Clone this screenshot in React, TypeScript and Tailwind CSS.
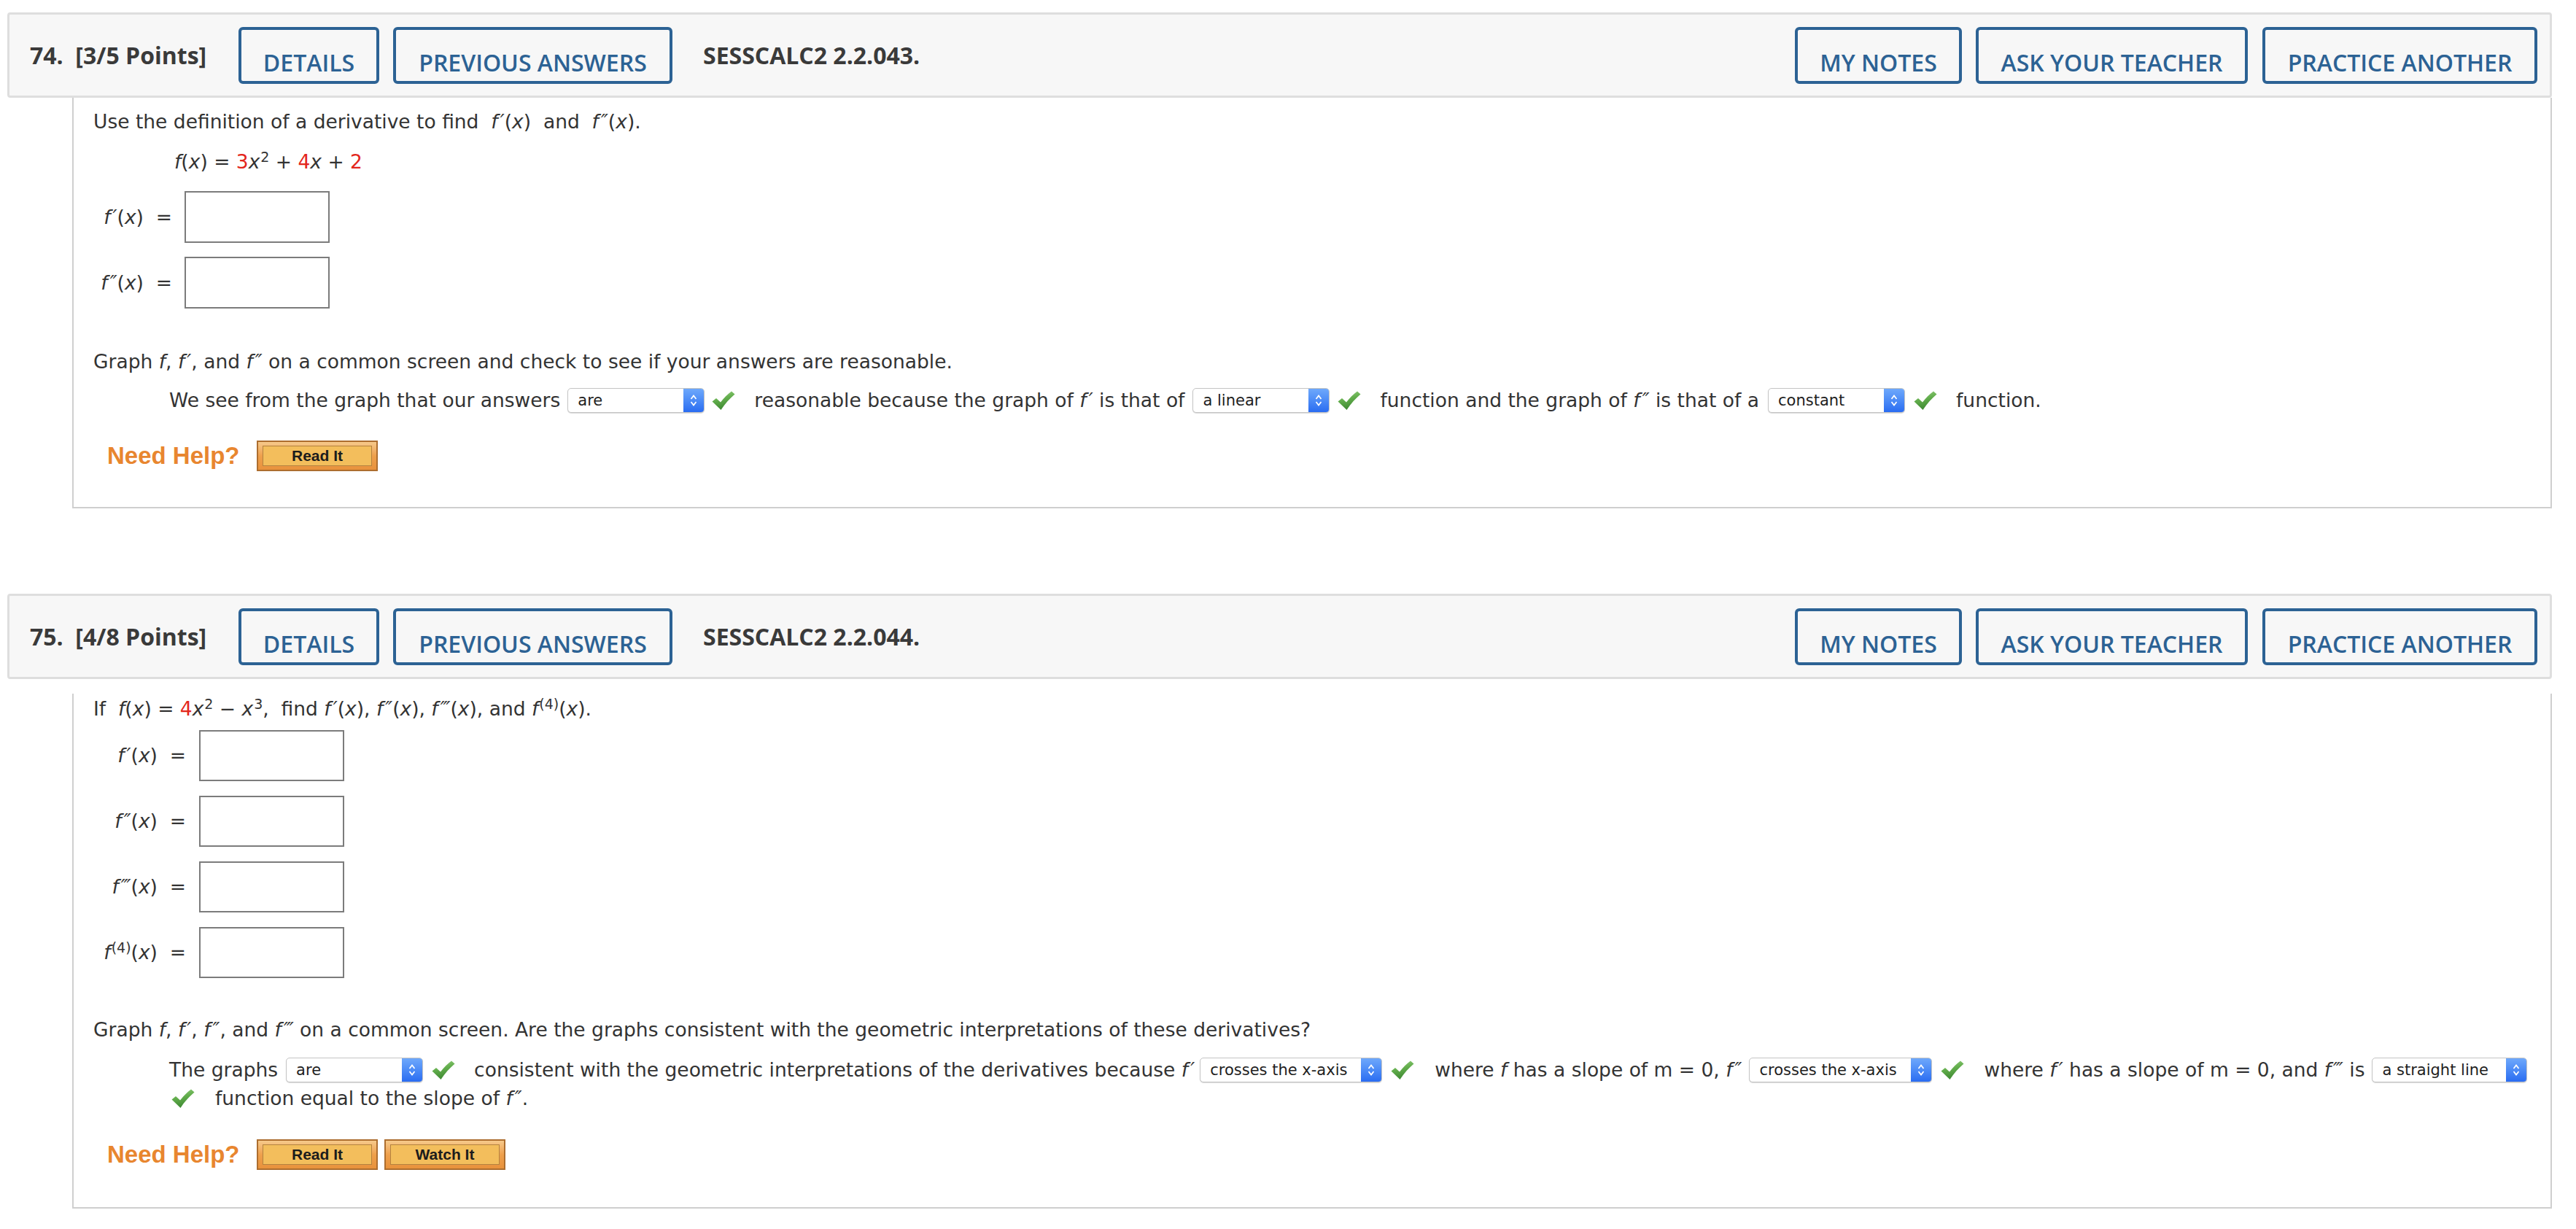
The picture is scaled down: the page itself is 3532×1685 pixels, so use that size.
import React from "react";

// ── Small pieces ─────────────────────────────────────────────────────────────

function HeadButton({ label, w, className = "" }: { label: string; w: string; className?: string }) {
  return (
    <div
      className={`flex h-[78px] ${w} shrink-0 justify-center rounded-[6px] border-[4px] border-[#2c6294] pt-[25px] text-[32px] font-semibold leading-[40px] text-[#2c6294] ${className}`}
    >
      {label}
    </div>
  );
}

function Header({ num, points, code }: { num: string; points: string; code: string }) {
  return (
    <div className="flex h-[117px] items-center rounded-[4px] border-[3px] border-[#dedede] bg-[#f7f7f7] pl-[28px] pr-[17px] font-['Open_Sans',sans-serif]">
      <div className="w-[286px] shrink-0 whitespace-pre text-[32px] font-bold text-[#3a3a3a]">
        {num}.  [{points} Points]
      </div>
      <HeadButton label="DETAILS" w="w-[193px]" />
      <HeadButton label="PREVIOUS ANSWERS" w="w-[383px]" className="ml-[19px]" />
      <div className="ml-[42px] text-[32px] font-bold text-[#3a3a3a]">{code}</div>
      <div className="flex-1" />
      <HeadButton label="MY NOTES" w="w-[229px]" />
      <HeadButton label="ASK YOUR TEACHER" w="w-[373px]" className="ml-[19px]" />
      <HeadButton label="PRACTICE ANOTHER" w="w-[377px]" className="ml-[20px]" />
    </div>
  );
}

function Check({ className = "" }: { className?: string }) {
  return (
    <svg viewBox="0 0 32 26" className={`h-[27px] w-[32px] shrink-0 ${className}`}>
      <defs>
        <linearGradient id="chk" x1="0" y1="0" x2="0.3" y2="1">
          <stop offset="0" stopColor="#9ad283" />
          <stop offset="0.5" stopColor="#62ad4c" />
          <stop offset="1" stopColor="#3f8a33" />
        </linearGradient>
      </defs>
      <path d="M0.5 14 L6 9.5 L12 15 C16.5 9 21.5 4 27 0 L31.5 4 C24.5 10 18 17 12.5 25.5 Z" fill="url(#chk)" />
    </svg>
  );
}

function Select({ value, w }: { value: string; w: string }) {
  return (
    <div
      className={`flex h-[34px] ${w} shrink-0 overflow-hidden rounded-[5px] border border-[#c4c4c4] bg-white shadow-[0_1px_1px_rgba(0,0,0,0.15)]`}
    >
      <span className="flex-1 pl-[13px] text-[21px] leading-[32px] text-[#1e1e1e]">{value}</span>
      <span className="flex w-[28px] items-center justify-center bg-gradient-to-b from-[#6ea8fb] to-[#2a6cf1]">
        <svg viewBox="0 0 12 22" className="h-[22px] w-[12px]">
          <path d="M2.5 9 L6 4.5 L9.5 9 M2.5 13 L6 17.5 L9.5 13" fill="none" stroke="white" strokeWidth="1.7" />
        </svg>
      </span>
    </div>
  );
}

function HelpButton({ label, className = "" }: { label: string; className?: string }) {
  return (
    <div
      className={`h-[42px] w-[166px] shrink-0 border-2 border-[#ad6e2f] bg-gradient-to-b from-[#f6c98a] via-[#eea04c] to-[#e8923c] px-[6px] py-[5px] ${className}`}
    >
      <div className="flex h-full w-full items-center justify-center border border-[#b4823f] bg-[#f3be5c] font-['Liberation_Sans',Arial,sans-serif] text-[21px] font-bold text-[#1c1c1c]">
        {label}
      </div>
    </div>
  );
}

function NeedHelp({ watch }: { watch?: boolean }) {
  return (
    <div className="flex h-[42px] items-center pl-[19px]">
      <span className="w-[205px] font-['Liberation_Sans',Arial,sans-serif] text-[33px] font-bold text-[#e8862f]">
        Need Help?
      </span>
      <HelpButton label="Read It" />
      {watch && <HelpButton label="Watch It" className="ml-[9px]" />}
    </div>
  );
}

function Box({ h }: { h: string }) {
  return <div className={`${h} w-[199px] shrink-0 border-2 border-[#7c7c7c] bg-white`} />;
}

const F = () => <i>f</i>;
const X = () => <i>x</i>;
// primes sit a little off the slanted f
const P = ({ n }: { n: string }) => <i className="ml-[3px]">{n}</i>;
const Sup = ({ t }: { t: string }) => <sup className="ml-[1px] text-[19px]">{t}</sup>;

// ── Page ─────────────────────────────────────────────────────────────────────

export default function App() {
  return (
    <div className="min-h-[1685px] w-[3532px] bg-white pt-[17px] font-['DejaVu_Sans',Verdana,sans-serif] text-[26.5px] text-[#333333]">
      {/* Question 74 */}
      <div className="ml-[10px] w-[3489px]">
        <Header num="74" points="3/5" code="SESSCALC2 2.2.043." />
        <div className="ml-[89px] border-x-2 border-b-2 border-[#cfcfcf] pb-[49px] pl-[27px]">
          <div className="h-[66px] whitespace-pre leading-[66px]">
            Use the definition of a derivative to find  <F /><P n="′" />(<X />)  and  <F /><P n="″" />(<X />).
          </div>
          <div className="ml-[111px] h-[44px] whitespace-pre leading-[44px]">
            <F />(<X />) = <span className="text-[#e3261c]">3</span>
            <X />
            <Sup t="2" /> + <span className="text-[#e3261c]">4</span>
            <X /> + <span className="text-[#e3261c]">2</span>
          </div>

          <div className="mt-[18px] flex items-center">
            <div className="w-[108px] whitespace-pre text-right">
              <F /><P n="′" />(<X />)  =
            </div>
            <div className="ml-[17px]">
              <Box h="h-[71px]" />
            </div>
          </div>
          <div className="mt-[19px] flex items-center">
            <div className="w-[108px] whitespace-pre text-right">
              <F /><P n="″" />(<X />)  =
            </div>
            <div className="ml-[17px]">
              <Box h="h-[71px]" />
            </div>
          </div>

          <div className="mt-[49px] h-[48px] whitespace-pre leading-[48px]">
            Graph <F />, <F /><P n="′" />, and <F /><P n="″" /> on a common screen and check to see if your answers are
            reasonable.
          </div>

          <div className="ml-[104px] mt-[10px] flex h-[38px] items-center whitespace-pre">
            <span className="mr-[10px]">We see from the graph that our answers</span>
            <Select value="are" w="w-[188px]" />
            <Check className="ml-[10px] mr-[26px]" />
            <span className="mr-[11px]">
              reasonable because the graph of <F /><P n="′" /> is that of
            </span>
            <Select value="a linear" w="w-[188px]" />
            <Check className="ml-[11px] mr-[26px]" />
            <span className="mr-[12px]">
              function and the graph of <F /><P n="″" /> is that of a
            </span>
            <Select value="constant" w="w-[188px]" />
            <Check className="ml-[12px] mr-[26px]" />
            <span>function.</span>
          </div>

          <div className="mt-[36px]">
            <NeedHelp />
          </div>
        </div>
      </div>

      {/* Question 75 */}
      <div className="ml-[10px] mt-[117px] w-[3489px]">
        <Header num="75" points="4/8" code="SESSCALC2 2.2.044." />
        <div className="ml-[89px] border-x-2 border-b-2 border-[#cfcfcf] pb-[51px] pl-[27px]">
          <div className="mt-[20px] h-[42px] whitespace-pre leading-[42px]">
            If  <F />(<X />) = <span className="text-[#e3261c]">4</span>
            <X />
            <Sup t="2" /> − <X />
            <Sup t="3" />,  find <F /><P n="′" />(<X />), <F /><P n="″" />(<X />), <F /><P n="‴" />(<X />), and{" "}
            <F />
            <Sup t="(4)" />(<X />).
          </div>

          {[
            { k: "1", lab: <><F /><P n="′" />(<X />)  =</>, mt: "mt-[8px]" },
            { k: "2", lab: <><F /><P n="″" />(<X />)  =</>, mt: "mt-[20px]" },
            { k: "3", lab: <><F /><P n="‴" />(<X />)  =</>, mt: "mt-[20px]" },
            { k: "4", lab: <><F /><Sup t="(4)" />(<X />)  =</>, mt: "mt-[20px]" },
          ].map((r) => (
            <div key={r.k} className={`${r.mt} flex items-center`}>
              <div className="w-[127px] whitespace-pre text-right">{r.lab}</div>
              <div className="ml-[18px]">
                <Box h="h-[70px]" />
              </div>
            </div>
          ))}

          <div className="mt-[47px] h-[48px] whitespace-pre leading-[48px]">
            Graph <F />, <F /><P n="′" />, <F /><P n="″" />, and <F /><P n="‴" /> on a common screen. Are the graphs
            consistent with the geometric interpretations of these derivatives?
          </div>

          <div className="ml-[104px] mt-[12px] flex h-[38px] items-center whitespace-pre">
            <span className="mr-[11px]">The graphs</span>
            <Select value="are" w="w-[188px]" />
            <Check className="ml-[12px] mr-[26px]" />
            <span className="mr-[7px]">
              consistent with the geometric interpretations of the derivatives because <F /><P n="′" />
            </span>
            <Select value="crosses the x-axis" w="w-[250px]" />
            <Check className="ml-[12px] mr-[28px]" />
            <span className="mr-[10px]">
              where <F /> has a slope of m = 0, <F /><P n="″" />
            </span>
            <Select value="crosses the x-axis" w="w-[251px]" />
            <Check className="ml-[12px] mr-[27px]" />
            <span className="mr-[10px]">
              where <F /><P n="′" /> has a slope of m = 0, and <F /><P n="‴" /> is
            </span>
            <Select value="a straight line" w="w-[213px]" />
          </div>
          <div className="ml-[107px] mt-[1px] flex h-[38px] items-center whitespace-pre">
            <Check className="mr-[28px]" />
            <span>
              function equal to the slope of <F /><P n="″" />.
            </span>
          </div>

          <div className="mt-[37px]">
            <NeedHelp watch />
          </div>
        </div>
      </div>
    </div>
  );
}
